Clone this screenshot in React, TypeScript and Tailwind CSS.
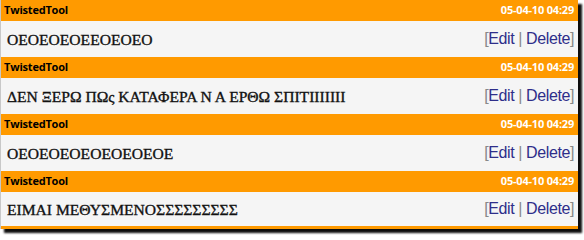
const posts = [
  { author: "TwistedTool", date: "05-04-10 04:29", text: "ΟΕΟΕΟΕΟΕΕΟΕΟΕΟ" },
  { author: "TwistedTool", date: "05-04-10 04:29", text: "ΔΕΝ ΞΕΡΩ ΠΩς ΚΑΤΑΦΕΡΑ Ν Α ΕΡΘΩ ΣΠΙΤΙΙΙΙΙΙΙ" },
  { author: "TwistedTool", date: "05-04-10 04:29", text: "ΟΕΟΕΟΕΟΕΟΕΟΕΟΕΟΕ" },
  { author: "TwistedTool", date: "05-04-10 04:29", text: "ΕΙΜΑΙ ΜΕΘΥΣΜΕΝΟΣΣΣΣΣΣΣΣΣ" },
];

export default function App() {
  return (
    <div className="w-[584px] h-[235px] bg-white overflow-hidden">
      <div className="w-[578px] border-l border-[#c8c8c8] bg-[#ff9a00] pb-[3px] shadow-[4px_4px_2px_rgba(0,0,0,0.95)]">
        {posts.map((p, i) => (
          <div key={i}>
            {/* header bar */}
            <div className="h-[21px] flex items-center justify-between pl-[3px] pr-[4px] bg-[#ff9a00] font-['Open_Sans',sans-serif] text-[11px] font-bold tracking-[-0.2px]">
              <span className="text-black">{p.author}</span>
              <span className="text-white">{p.date}</span>
            </div>
            {/* body */}
            <div
              className={`flex items-center justify-between pl-[6px] pr-[4px] bg-[#f5f5f5] ${
                i === posts.length - 1 ? "h-[34px]" : "h-[36px]"
              }`}
            >
              <span className="pt-[1px] font-['Liberation_Serif',serif] text-[15.6px] text-[#111] [-webkit-text-stroke:0.35px_#111]">
                {p.text}
              </span>
              <span className="font-['Liberation_Sans',sans-serif] text-[16px] tracking-[-0.4px] text-[#888]">
                [<a className="text-[#2e2e8a]">Edit</a> | <a className="text-[#2e2e8a]">Delete</a>]
              </span>
            </div>
          </div>
        ))}
      </div>
    </div>
  );
}
